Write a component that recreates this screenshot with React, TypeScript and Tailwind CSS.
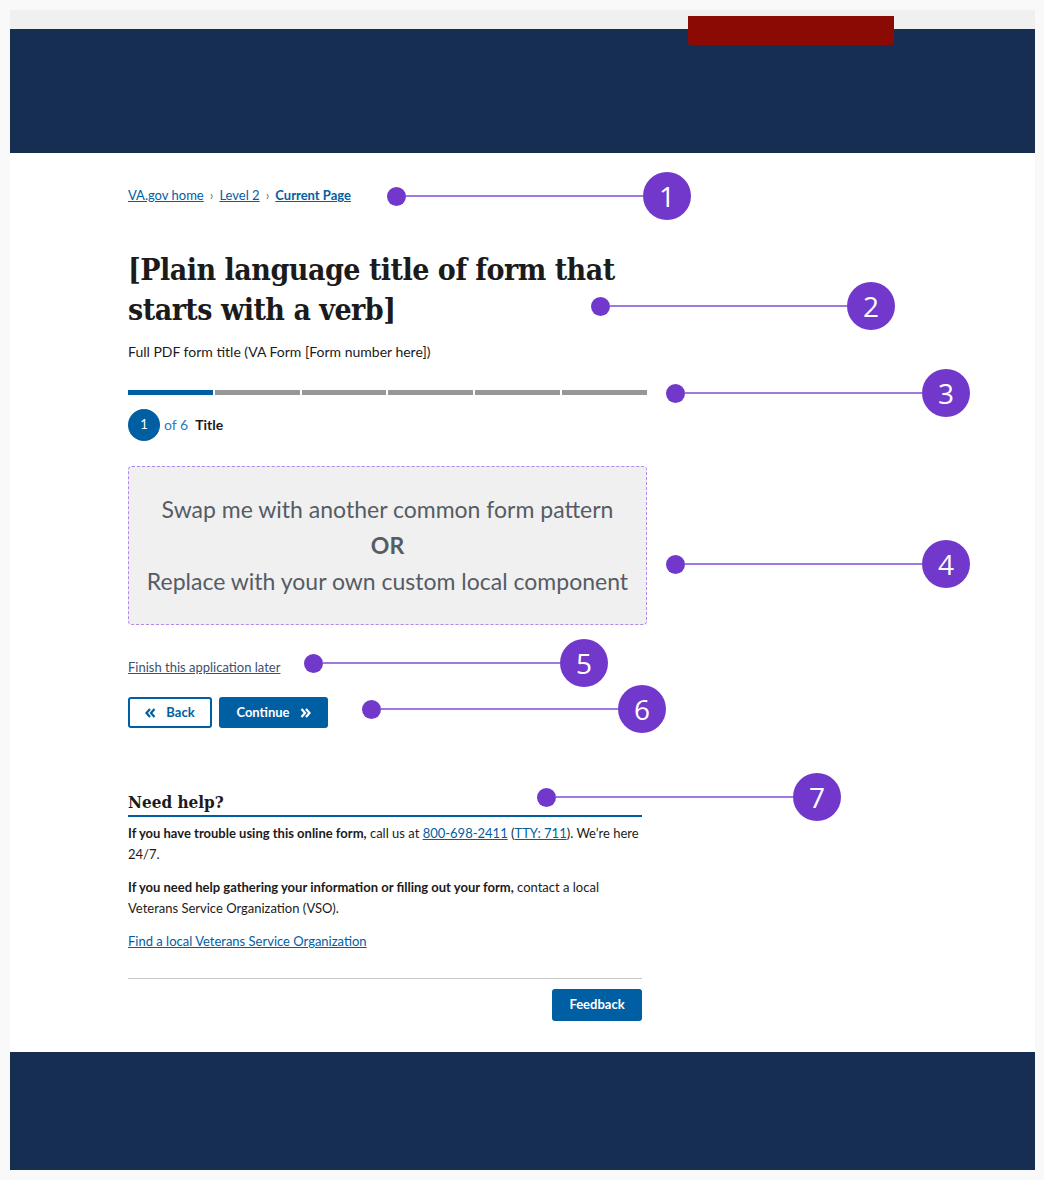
import React from "react";

const sans = "font-['Lato','Liberation_Sans',sans-serif]";
const serif = "font-['DejaVu_Serif_Condensed','DejaVu_Serif','Liberation_Serif',serif]";

type Note = { n: number; left: number; top: number };

const notes: Note[] = [
  { n: 1, left: 387, top: 172 },
  { n: 2, left: 591, top: 282 },
  { n: 3, left: 666, top: 369 },
  { n: 4, left: 666, top: 540 },
  { n: 5, left: 304, top: 639 },
  { n: 6, left: 362, top: 685 },
  { n: 7, left: 537, top: 773 },
];

function Callout({ n, left, top }: Note) {
  return (
    <div className="absolute flex h-12 items-center" style={{ left, top }}>
      <span className="h-[19px] w-[19px] rounded-full bg-[#7138cb]" />
      <span className="h-[2px] w-[237px] bg-[#9f78e0]" />
      <span className="flex h-12 w-12 items-center justify-center rounded-full bg-[#7138cb] font-['Open_Sans',sans-serif] text-[28px] font-normal text-white">
        {n}
      </span>
    </div>
  );
}

function ChevronsLeft() {
  return (
    <svg width="11" height="10" viewBox="0 0 11 10" fill="none" stroke="currentColor" strokeWidth="2.2">
      <path d="M5 1 1.5 5 5 9M9.5 1 6 5 9.5 9" />
    </svg>
  );
}

function ChevronsRight() {
  return (
    <svg width="11" height="10" viewBox="0 0 11 10" fill="none" stroke="currentColor" strokeWidth="2.2">
      <path d="M1.5 1 5 5 1.5 9M6 1 9.5 5 6 9" />
    </svg>
  );
}

export default function App() {
  return (
    <div className={`relative h-[1180px] w-[1044px] bg-[#f9f9f9] p-[10px] ${sans} text-[#1b1b1b]`}>
      <div className="flex h-[1160px] w-[1025px] flex-col bg-white">
        {/* header */}
        <div className="relative h-[19px] bg-[#f0f0f0]">
          <div className="absolute left-[678px] top-[6px] h-[29px] w-[206px] rounded-b-[3px] bg-[#8b0b04]" />
        </div>
        <div className="h-[124px] bg-[#162e51]" />

        {/* main */}
        <main className="flex-1 pl-[118px] pt-[33px]">
          <nav className="flex items-center gap-[6px] text-[13px] text-[#005ea2]">
            <a className="underline">VA.gov home</a>
            <span className="text-[#71767a]">›</span>
            <a className="underline">Level 2</a>
            <span className="text-[#71767a]">›</span>
            <a className="font-bold underline">Current Page</a>
          </nav>

          <h1 className={`mt-[44px] w-[530px] ${serif} text-[30px] font-bold leading-[40px] tracking-[-0.5px] text-[#1b1b1b]`}>
            [Plain language title of form that starts with a verb]
          </h1>
          <p className="mt-[11px] text-[14px]">Full PDF form title (VA Form [Form number here])</p>

          <div className="mt-[28px] flex w-[519px] gap-[2px]">
            <div className="h-[5px] flex-1 bg-[#005ea2]" />
            <div className="h-[5px] flex-1 bg-[#979797]" />
            <div className="h-[5px] flex-1 bg-[#979797]" />
            <div className="h-[5px] flex-1 bg-[#979797]" />
            <div className="h-[5px] flex-1 bg-[#979797]" />
            <div className="h-[5px] flex-1 bg-[#979797]" />
          </div>

          <div className="mt-[14px] flex items-center text-[14px]">
            <span className="flex h-8 w-8 items-center justify-center rounded-full bg-[#005ea2] text-[13px] text-white">1</span>
            <span className="ml-[4px] text-[#2e78c0]">of 6</span>
            <span className="ml-[7px] font-bold">Title</span>
          </div>

          <div className="mt-[25px] flex h-[159px] w-[519px] flex-col items-center justify-center rounded-[4px] border-[1.5px] border-dashed border-[#b088f0] bg-[#f0f0f0] text-[23px] leading-[36px] text-[#565c65]">
            <p>Swap me with another common form pattern</p>
            <p className="font-bold">OR</p>
            <p>Replace with your own custom local component</p>
          </div>

          <a className="mt-[33px] block text-[13px] text-[#3d4f6e] underline">Finish this application later</a>

          <div className="mt-[20px] flex gap-[7px]">
            <button className="flex h-[31px] w-[84px] items-center justify-center gap-[10px] rounded-[3px] border-2 border-[#005ea2] text-[13px] font-bold text-[#005ea2]">
              <ChevronsLeft />
              Back
            </button>
            <button className="flex h-[31px] w-[109px] items-center justify-center gap-[10px] rounded-[3px] bg-[#005ea2] text-[13px] font-bold text-white">
              Continue
              <ChevronsRight />
            </button>
          </div>

          <section className="mt-[63px] w-[514px]">
            <h2 className={`border-b-2 border-[#005ea2] pb-[2px] ${serif} text-[17px] font-bold leading-[22px]`}>Need help?</h2>
            <p className="mt-[6px] text-[13px] leading-[21px]">
              <b>If you have trouble using this online form,</b> call us at{" "}
              <a className="text-[#005ea2] underline">800-698-2411</a> (<a className="text-[#005ea2] underline">TTY: 711</a>).
              We’re here 24/7.
            </p>
            <p className="mt-[12px] text-[13px] leading-[21px]">
              <b>If you need help gathering your information or filling out your form,</b> contact a local
              Veterans Service Organization (VSO).
            </p>
            <a className="mt-[12px] block text-[13px] leading-[21px] text-[#005ea2] underline">
              Find a local Veterans Service Organization
            </a>
            <div className="mt-[26px] border-t border-[#c9c9c9]" />
            <div className="mt-[10px] flex justify-end">
              <button className="h-[32px] w-[90px] rounded-[3px] bg-[#005ea2] text-[13px] font-bold text-white">Feedback</button>
            </div>
          </section>
        </main>

        {/* footer */}
        <div className="h-[118px] bg-[#162e51]" />
      </div>

      {notes.map((note) => (
        <Callout key={note.n} {...note} />
      ))}
    </div>
  );
}
